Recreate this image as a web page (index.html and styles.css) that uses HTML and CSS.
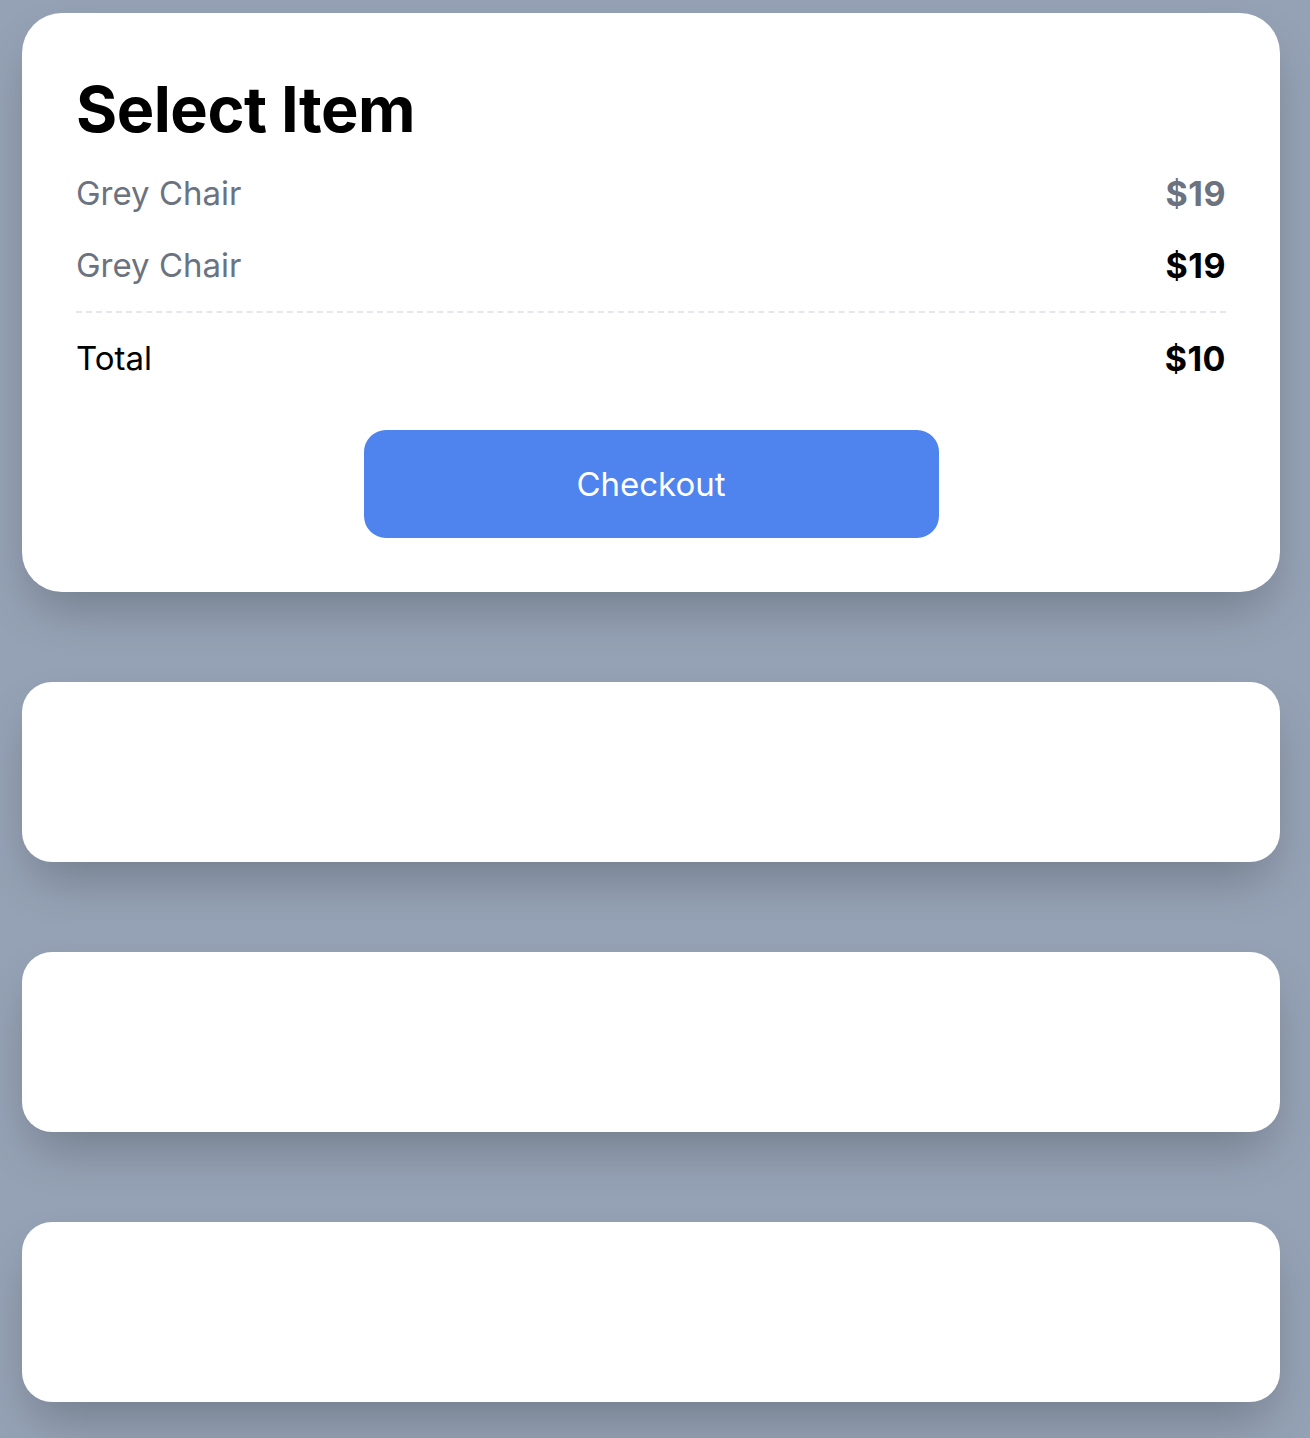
FILE: index.html
```html
<!DOCTYPE html>
<html>
<head>
<meta charset="utf-8">
<link rel="stylesheet" href="styles.css">
</head>
<body>
<div class="page">
  <div class="card card-main">
    <h1 class="title">Select Item</h1>
    <div class="row">
      <span class="name">Grey Chair</span>
      <span class="price price-muted">$19</span>
    </div>
    <div class="row">
      <span class="name">Grey Chair</span>
      <span class="price">$19</span>
    </div>
    <div class="divider"></div>
    <div class="row">
      <span class="total">Total</span>
      <span class="price">$10</span>
    </div>
    <div class="actions">
      <button class="checkout">Checkout</button>
    </div>
  </div>
  <div class="card card-empty"></div>
  <div class="card card-empty"></div>
  <div class="card card-empty"></div>
</div>
</body>
</html>
```

FILE: styles.css
```css
html, body {
  margin: 0;
  padding: 0;
}
body {
  background: #95a2b5;
  font-family: Inter, "Liberation Sans", sans-serif;
  min-height: 1438px;
}
.page {
  padding: 13px 30px 36px 22px;
  display: flex;
  flex-direction: column;
  gap: 90px;
}
.card {
  background: #ffffff;
  box-shadow: 0 25px 50px -12px rgba(0, 0, 0, 0.25);
}
.card-main {
  border-radius: 40px;
  padding: 58px 54px 54px 54px;
  display: flex;
  flex-direction: column;
}
.card-empty {
  border-radius: 30px;
  height: 180px;
}
.title {
  margin: 0 0 10px 0;
  font-size: 63px;
  line-height: 76px;
  font-weight: 700;
  color: #000;
  letter-spacing: -0.5px;
}
.row {
  display: flex;
  justify-content: space-between;
  align-items: center;
  height: 72px;
}
.name {
  font-size: 33px;
  color: #6b7280;
}
.price {
  font-size: 34px;
  font-weight: 700;
  color: #000;
  letter-spacing: 0.5px;
}
.price-muted {
  color: #6b7280;
}
.divider {
  border-top: 2px dashed #e5e7eb;
  margin: 10px 0 9px 0;
}
.total {
  font-size: 33px;
  color: #000;
}
.actions {
  display: flex;
  justify-content: center;
  margin-top: 36px;
}
.checkout {
  width: 575px;
  height: 108px;
  border: none;
  border-radius: 22px;
  background: #4f83ee;
  color: #ffffff;
  font-family: Inter, "Liberation Sans", sans-serif;
  font-size: 33px;
}
```
